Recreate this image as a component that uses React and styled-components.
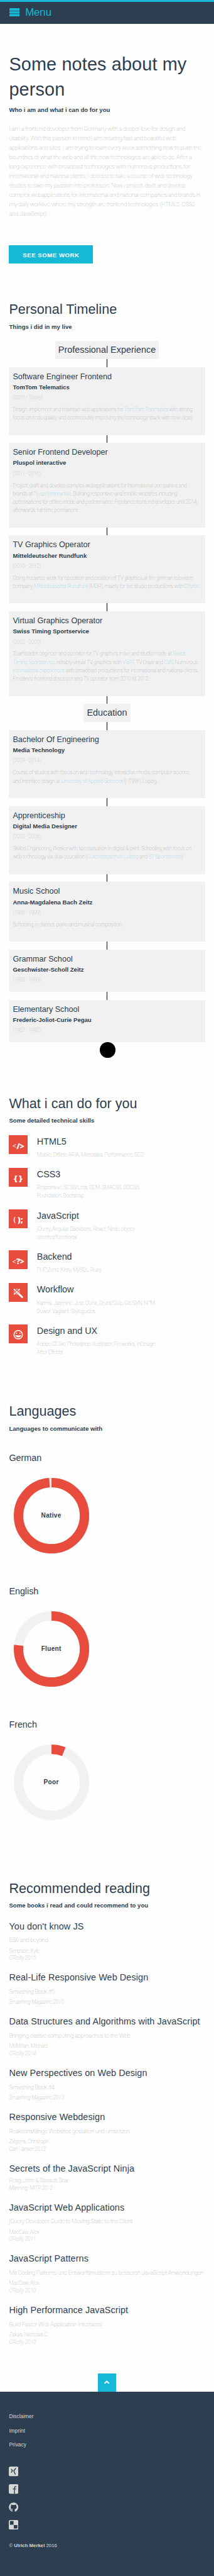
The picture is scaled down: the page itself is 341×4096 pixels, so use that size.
import React from 'react';
import styled, { createGlobalStyle, css } from 'styled-components';
import { FaGithub } from 'react-icons/fa';

const navy = '#2d3e50';
const cyan = '#15b8d7';
const red = '#e84c3d';
const pale = '#f1f1f1';
const body = '#a3a3a3';

/* 1rem = 10 design units */
const GlobalStyle = createGlobalStyle`
  html { font-size: 6.005px; }
  body {
    margin: 0;
    background: #fefefe;
    color: ${navy};
    font-family: "Liberation Sans", Arial, sans-serif;
  }
  *, *::before, *::after { box-sizing: border-box; }
  h1, h2, h3, h4, p, ul { margin: 0; padding: 0; font-weight: 400; }
  a { color: inherit; text-decoration: none; }
`;

const thin = css`
  font-family: Roboto, "Liberation Sans", sans-serif;
  font-weight: 100;
  letter-spacing: -0.036em;
  white-space: nowrap;
  color: ${body};
`;

const Page = styled.div`
  display: flex;
  flex-direction: column;
  width: 100%;
  min-height: 4096px;
`;

const Header = styled.header`
  display: flex;
  align-items: center;
  gap: 1.5rem;
  height: 6.4rem;
  padding: 0 2.5rem 0.3rem;
  border-top: 0.6rem solid ${cyan};
  background: ${navy};
  color: ${cyan};
  font-size: 2.8rem;
  letter-spacing: -0.005em;
`;

const MenuIcon = styled.svg`
  display: block;
  width: 2.7rem;
  height: 2.2rem;
  fill: currentColor;
`;

const Section = styled.section`
  padding: ${(p) => p.$top}rem 2.4rem 0;
`;

const PageTitle = styled.h1`
  font-size: 4.8rem;
  line-height: 6.7rem;
  letter-spacing: 0.005em;
`;

const SectionTitle = styled.h2`
  font-size: 3.6rem;
  line-height: 5rem;
  white-space: nowrap;
`;

const Tagline = styled.p`
  margin-top: 0.9rem;
  font-size: 1.6rem;
  line-height: 2.4rem;
  font-weight: 700;
  white-space: nowrap;
`;

const Intro = styled.p`
  ${thin}
  margin-top: 2.47rem;
  font-size: 1.6rem;
  line-height: 2.5rem;
`;

const WorkButton = styled.a`
  display: flex;
  align-items: center;
  justify-content: center;
  width: 22.3rem;
  height: 4.8rem;
  margin-top: 7.15rem;
  padding-top: 0.2rem;
  background: ${cyan};
  color: #fff;
  font-size: 1.6rem;
  font-weight: 700;
  letter-spacing: 0.056em;
`;

const Timeline = styled.div`
  display: flex;
  flex-direction: column;
  align-items: center;
  margin-top: 2.4rem;
`;

const Stage = styled.h3`
  padding: 0 0.85rem;
  background: ${pale};
  font-size: 2.4rem;
  line-height: 4.87rem;
`;

const Connector = styled.div`
  width: 1px;
  height: 2.1rem;
  background: #000;
`;

const Card = styled.article`
  align-self: stretch;
  padding: 1rem 1rem 1.94rem;
  background: ${pale};
`;

const CardTitle = styled.h4`
  font-size: 2.1rem;
  line-height: 3rem;
`;

const CardPlace = styled.p`
  margin-top: 0.2rem;
  font-size: 1.6rem;
  line-height: 2.2rem;
  font-weight: 700;
  letter-spacing: -0.002em;
`;

const CardDate = styled.p`
  ${thin}
  margin-top: 0.68rem;
  font-size: 1.4rem;
  line-height: 2.2rem;
  opacity: 0.75;
`;

const CardText = styled.p`
  ${thin}
  margin: 0.96rem 0 1.42rem;
  font-size: 1.4rem;
  line-height: 2.2rem;
`;

const Link = styled.a`
  && { color: #7fd0e6; }
`;

const EndDot = styled.div`
  width: 4.1rem;
  height: 4.1rem;
  margin-left: 0.3rem;
  border-radius: 50%;
  background: #000;
`;

const SkillList = styled.div`
  display: flex;
  flex-direction: column;
  margin-top: 2.5rem;
`;

const Skill = styled.div`
  display: grid;
  grid-template-columns: 5rem 1fr;
  column-gap: 2.4rem;
  align-items: start;
  padding-bottom: 2.33rem;
`;

const SkillIcon = styled.svg`
  display: block;
  width: 5rem;
  height: 5rem;
  background: ${red};
  fill: #fff;
  font-family: "Open Sans", sans-serif;
  font-size: 21px;
  font-weight: 800;
`;

const SkillName = styled.h3`
  font-size: 2.4rem;
  line-height: 3.36rem;
  letter-spacing: -0.003em;
`;

const SkillText = styled.p`
  ${thin}
  margin-top: 0.83rem;
  font-size: 1.4rem;
  line-height: 2.2rem;
  letter-spacing: -0.029em;
`;

const Language = styled.div`
  margin-bottom: 8.29rem;
`;

const LanguageName = styled.h3`
  font-size: 2.4rem;
  line-height: 3.4rem;
  letter-spacing: -0.004em;
`;

const LanguageList = styled.div`
  margin-top: 4.84rem;
`;

const Gauge = styled.div`
  display: grid;
  place-items: center;
  width: 20rem;
  height: 20rem;
  margin: 3.6rem 0 0 1.2rem;

  > * { grid-area: 1 / 1; }
`;

const Ring = styled.svg`
  width: 100%;
  height: 100%;
  fill: none;
  stroke-width: 25;
`;

const GaugeLabel = styled.span`
  font-size: 1.68rem;
  line-height: 2.4rem;
  font-weight: 700;
  letter-spacing: 0.03em;
`;

const BookList = styled.div`
  margin-top: 2.48rem;
`;

const Book = styled.article`
  padding-bottom: 2.41rem;
`;

const BookTitle = styled.h3`
  font-size: 2.4rem;
  line-height: 3.4rem;
  letter-spacing: 0.006em;
  white-space: nowrap;
`;

const BookSubtitle = styled.p`
  ${thin}
  margin-top: 0.88rem;
  font-size: 1.6rem;
  line-height: 2.2rem;
`;

const BookCredit = styled.div`
  ${thin}
  display: flex;
  flex-direction: column;
  margin-top: ${(p) => (p.$close ? 0.71 : 0.86)}rem;
  font-size: 1.4rem;
  line-height: 1.92rem;
  letter-spacing: -0.022em;
`;

const TopButton = styled.a`
  display: grid;
  place-items: center;
  align-self: center;
  width: 4.8rem;
  height: 4.8rem;
  margin-top: 4.9rem;
  background: ${cyan};
`;

const Chevron = styled.svg`
  width: 1.4rem;
  height: 0.9rem;
  margin-bottom: 0.2rem;
  fill: none;
  stroke: #fff;
  stroke-width: 3.4;
  stroke-linecap: round;
  stroke-linejoin: round;
`;

const Footer = styled.footer`
  flex: 1;
  padding: 5.6rem 2.4rem 0;
  background: ${navy};
  color: #d6d6d6;
`;

const FooterLinks = styled.nav`
  display: flex;
  flex-direction: column;
  gap: 1.5rem;
  font-size: 1.4rem;
  line-height: 2.2rem;
`;

const Social = styled.nav`
  display: flex;
  flex-direction: column;
  gap: 2.13rem;
  margin: 4.7rem 0 0 -0.07rem;

  svg {
    display: block;
    width: 2.57rem;
    height: 2.56rem;
  }
`;

const Copyright = styled.p`
  margin-top: 3.3rem;
  font-size: 1.3rem;
  line-height: 2rem;
`;

const lines = (rows) =>
  rows.map((row, i) => (
    <React.Fragment key={i}>
      {i > 0 && <br />}
      {row}
    </React.Fragment>
  ));

const intro = [
  'I am a frontend developer from Germany with a deeper love for design and',
  'usability. With this passion in mind i am creating fast and beautiful web',
  'applications and sites. I am trying to learn every week something new to push the',
  'boundries of what the web and all the new technologies are able to do. After a',
  'long experience with broadcast technologies with numerous productions for',
  'international and national clients, i decided to take a course of web technology',
  'studies to take my passion into profession. Now i project, draft and develop',
  'complex webapplications for international and national companies and brands in',
  'my daily worklive, where my strength are frontend technologies (HTML5, CSS3',
  'and JavaScript).',
];

const jobs = [
  {
    title: 'Software Engineer Frontend', place: 'TomTom Telematics', date: '(2016 - Today)',
    text: [
      <>Design, implement and maintain web applications for <Link>TomTom Telematics</Link> with strong</>,
      'focus on code quality and continuously improving the technology stack with new ideas.',
    ],
  },
  {
    title: 'Senior Frontend Developer', place: 'Pluspol interactive', date: '(2011 - 2016)',
    text: [
      'Project, draft and develop complex webapplications for international companies and',
      <>brands at <Link>Pluspol interactive</Link>. Building responsive and mobile websites including</>,
      'optimisations for offline mode and performance. Freelance frontend developer until 2014,',
      'afterwards full-time permanent.',
    ],
  },
  {
    title: 'TV Graphics Operator', place: 'Mitteldeutscher Rundfunk', date: '(2010 - 2012)',
    text: [
      'Doing freelance work for operation and creation of TV graphics at the german television',
      <>company <Link>Mitteldeutscher Rundfunk</Link> (MDR), mainly for live studio productions with <Link>Chyron</Link>.</>,
    ],
  },
  {
    title: 'Virtual Graphics Operator', place: 'Swiss Timing Sportservice', date: '(2002 - 2009)',
    text: [
      <>Teamleader, engineer and operator for TV graphics in live and studio mode at <Link>Swiss</Link></>,
      <><Link>Timing Sportservice</Link>, notably virtual TV graphics with <Link>VizRT</Link>, TV Draw and <Link>EVS</Link>. Numerous</>,
      <><Link>international experiences</Link> with broadcast productions for international and national clients.</>,
      'Freelance frontend developer and TV operator from 2010 till 2012.',
    ],
  },
];

const schools = [
  {
    title: 'Bachelor Of Engineering', place: 'Media Technology', date: '(2009 - 2014)',
    text: [
      'Course of studies with focus on web technology, interactive media, computer science',
      <>and interface design at <Link>University of Applied Sciences</Link> (HTWK) Leipzig.</>,
    ],
  },
  {
    title: 'Apprenticeship', place: 'Digital Media Designer', date: '(2003 - 2006)',
    text: [
      'Skilled Engineering Worker with specialisation in digital & print. Schooling with focus on',
      <>web technology via dual education (<Link>Gutenbergschule Leipzig</Link> and <Link>ST Sportservice</Link>).</>,
    ],
  },
  {
    title: 'Music School', place: 'Anna-Magdalena Bach Zeitz', date: '(1986 - 1999)',
    text: ['Schooling in clarinet, piano and musical composition.'],
  },
  { title: 'Grammar School', place: 'Geschwister-Scholl Zeitz', date: '(1992 - 1999)' },
  { title: 'Elementary School', place: 'Frederic-Joliot-Curie Pegau', date: '(1987 - 1992)' },
];

const skills = [
  {
    name: 'HTML5', text: ['Mobile, Offline, ARIA, Microdata, Performance, SEO'],
    icon: (
      <>
        <text x="9.5" y="35.5" fontSize="18" fontWeight="400">&lt;</text>
        <text x="20.5" y="36">/</text>
        <text x="29" y="36">&gt;</text>
      </>
    ),
  },
  {
    name: 'CSS3', text: ['Responsive, SCSS/Less, BEM, SMACSS, OOCSS,', 'Foundation, Bootstrap'],
    icon: (
      <>
        <text x="13.5" y="35">{'{'}</text>
        <text x="27" y="35">{'}'}</text>
      </>
    ),
  },
  {
    name: 'JavaScript', text: ['jQuery, Angular, Backbone, React, Node, object-', 'oriented/functional'],
    icon: (
      <>
        <text x="12.5" y="34" fontSize="19" fontWeight="600">(</text>
        <text x="23.5" y="35">)</text>
        <text x="31.3" y="35">;</text>
      </>
    ),
  },
  {
    name: 'Backend', text: ['PHP, Zend, Kirby, MySQL, Ruby'],
    icon: (
      <>
        <text x="9.2" y="36.5" fontSize="18" fontWeight="400">&lt;</text>
        <text x="19.6" y="36">?</text>
        <text x="29.4" y="36.5" fontSize="20">&gt;</text>
      </>
    ),
  },
  {
    name: 'Workflow', text: ['Karma, Jasmine, Jest, QUnit, Grunt/Gulp, Git/SVN, NPM,', 'Bower, Vagrant, Styleguides'],
    icon: (
      <g fill="none" stroke="#fff" strokeLinecap="round">
        <path d="M20.5 23 35.5 37.5" strokeWidth="5" />
        <path d="M21 23.3 25.5 27.6" stroke={red} strokeWidth="1.3" />
        <path d="M14.5 17 17.2 19.5M28 17 25.3 19.5M14.5 29.5 17.2 27" strokeWidth="3.2" />
        <path d="M21.3 15.5v2.4M13.4 23.4h2M27 23.4h2M21.3 29.8v.8" strokeWidth="1.6" />
      </g>
    ),
  },
  {
    name: 'Design and UX', text: ['Adobe CC like Photoshop, Illustrator, Fireworks, InDesign,', 'After Effects'],
    icon: (
      <>
        <circle cx="25" cy="27" r="11.2" fill="none" stroke="#fff" strokeWidth="2.7" />
        <circle cx="20.5" cy="23.4" r="1.7" />
        <circle cx="29.5" cy="23.4" r="1.7" />
        <path d="M17 28q8 2.6 16 0q-1.6 6.2-8 6.2T17 28Z" />
      </>
    ),
  },
];

const languages = [
  { name: 'German', level: 'Native', share: 0.99 },
  { name: 'English', level: 'Fluent', share: 0.768 },
  { name: 'French', level: 'Poor', share: 0.061 },
];

const books = [
  { title: "You don't know JS", sub: 'ES6 and beyond', author: 'Simpson, Kyle', press: "O'Reilly 2015" },
  { title: 'Real-Life Responsive Web Design', sub: 'Smashing Book #5', press: 'Smashing Magazine 2015' },
  { title: 'Data Structures and Algorithms with JavaScript', sub: 'Bringing classic computing approaches to the Web', author: 'McMillan, Michael', press: "O'Reilly 2014" },
  { title: 'New Perspectives on Web Design', sub: 'Smashing Book #4', press: 'Smashing Magazine 2013' },
  { title: 'Responsive Webdesign', sub: 'Reaktionsfähige Websites gestalten und umsetzen', author: 'Zillgens, Christoph', press: 'Carl Hanser 2013' },
  { title: 'Secrets of the JavaScript Ninja', author: 'Resig, John & Bibeault, Bear', press: 'Manning, MITP 2012' },
  { title: 'JavaScript Web Applications', sub: 'jQuery Developer Guide to Moving State to the Client', author: 'MacCaw, Alex', press: "O'Reilly 2011" },
  { title: 'JavaScript Patterns', sub: 'Mit Coding Patterns und Entwurfsmustern zu besseren JavaScript-Anwendungen', author: 'MacCaw, Alex', press: "O'Reilly 2010" },
  { title: 'High Performance JavaScript', sub: 'Build Faster Web Application Interfaces', author: 'Zakas, Nicholas C.', press: "O'Reilly 2010" },
];

function Entry({ title, place, date, text }) {
  return (
    <>
      <Connector />
      <Card>
        <CardTitle>{title}</CardTitle>
        <CardPlace>{place}</CardPlace>
        <CardDate>{date}</CardDate>
        {text && <CardText>{lines(text)}</CardText>}
      </Card>
    </>
  );
}

function LevelRing({ share, children }) {
  return (
    <Gauge>
      <Ring viewBox="0 0 200 200">
        <circle cx="100" cy="100" r="87.5" stroke={pale} />
        <circle
          cx="100" cy="100" r="87.5" stroke={red} pathLength="1000"
          strokeDasharray={`${share * 1000} 1000`} transform="rotate(-90 100 100)"
        />
      </Ring>
      <GaugeLabel>{children}</GaugeLabel>
    </Gauge>
  );
}

export default function App() {
  return (
    <Page>
      <GlobalStyle />
      <Header>
        <MenuIcon viewBox="0 0 27 22">
          <rect width="27" height="6.6" rx="0.8" />
          <rect y="8" width="27" height="6" rx="0.5" />
          <rect y="15.4" width="27" height="6.6" rx="0.8" />
        </MenuIcon>
        Menu
      </Header>

      <Section $top={7.3}>
        <PageTitle>Some notes about my<br />person</PageTitle>
        <Tagline>Who i am and what i can do for you</Tagline>
        <Intro>{lines(intro)}</Intro>
        <WorkButton>SEE SOME WORK</WorkButton>
      </Section>

      <Section $top={9.7}>
        <SectionTitle>Personal Timeline</SectionTitle>
        <Tagline>Things i did in my live</Tagline>
        <Timeline>
          <Stage>Professional Experience</Stage>
          {jobs.map((job) => <Entry key={job.title} {...job} />)}
          <Connector />
          <Stage>Education</Stage>
          {schools.map((school) => <Entry key={school.title} {...school} />)}
          <EndDot />
        </Timeline>
      </Section>

      <Section $top={9.67}>
        <SectionTitle>What i can do for you</SectionTitle>
        <Tagline>Some detailed technical skills</Tagline>
        <SkillList>
          {skills.map((skill) => (
            <Skill key={skill.name}>
              <SkillIcon viewBox="0 0 50 50">{skill.icon}</SkillIcon>
              <div>
                <SkillName>{skill.name}</SkillName>
                <SkillText>{lines(skill.text)}</SkillText>
              </div>
            </Skill>
          ))}
        </SkillList>
      </Section>

      <Section $top={9.61}>
        <SectionTitle>Languages</SectionTitle>
        <Tagline>Languages to communicate with</Tagline>
        <LanguageList>
          {languages.map((language) => (
            <Language key={language.name}>
              <LanguageName>{language.name}</LanguageName>
              <LevelRing share={language.share}>{language.level}</LevelRing>
            </Language>
          ))}
        </LanguageList>
      </Section>

      <Section $top={7.33}>
        <SectionTitle>Recommended reading</SectionTitle>
        <Tagline>Some books i read and could recommend to you</Tagline>
        <BookList>
          {books.map((book) => (
            <Book key={book.title}>
              <BookTitle>{book.title}</BookTitle>
              {book.sub && <BookSubtitle>{book.sub}</BookSubtitle>}
              <BookCredit $close={!book.sub}>
                {book.author && <span>{book.author}</span>}
                <em>{book.press}</em>
              </BookCredit>
            </Book>
          ))}
        </BookList>
      </Section>

      <TopButton aria-label="Back to top">
        <Chevron viewBox="0 0 14 9"><path d="M2 7 7 2.4 12 7" /></Chevron>
      </TopButton>

      <Footer>
        <FooterLinks>
          <a>Disclaimer</a>
          <a>Imprint</a>
          <a>Privacy</a>
        </FooterLinks>
        <Social>
          <svg viewBox="0 0 26 26">
            <rect width="26" height="26" rx="4.5" fill="#d6d6d6" />
            <path d="M6.8 6.8 9.6 11.2 6.6 16.4M19 4 13.4 12 17.8 21.6" fill="none" stroke={navy} strokeWidth="2.5" />
          </svg>
          <svg viewBox="0 0 26 26">
            <rect width="26" height="26" rx="4.5" fill="#d6d6d6" />
            <path d="M20.4 6.8h-2.2q-3 0-3 3.2V26M10.6 13h9.4" fill="none" stroke={navy} strokeWidth="2.3" />
          </svg>
          <FaGithub />
          <svg viewBox="0 0 26 26">
            <rect width="26" height="26" rx="4.5" fill="#d6d6d6" />
            <path d="M3 5a2.4 2.4 0 0 1 2.4-2.4H12.8V12.8H3ZM13.4 13.4H23.2V20.6a2.4 2.4 0 0 1-2.4 2.4H13.4Z" fill={navy} />
          </svg>
        </Social>
        <Copyright>© <b>Ulrich Merkel</b> 2016</Copyright>
      </Footer>
    </Page>
  );
}
